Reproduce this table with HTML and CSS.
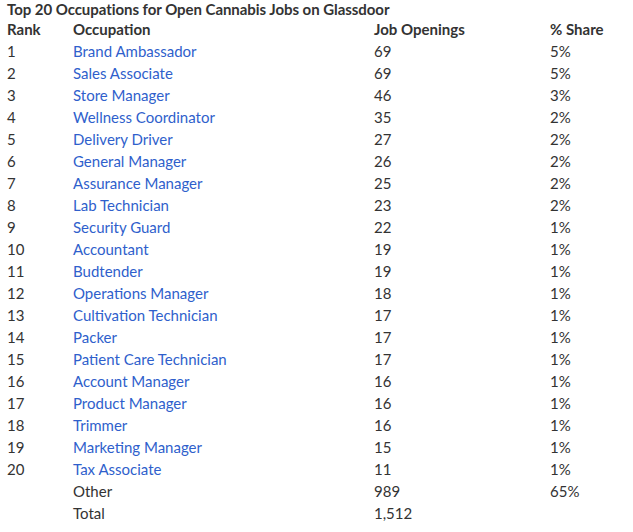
FILE: index.html
```html
<!DOCTYPE html>
<html>
<head>
<meta charset="utf-8">
<link rel="stylesheet" href="styles.css">
</head>
<body>
<div class="wrap">
  <div class="title">Top 20 Occupations for Open Cannabis Jobs on Glassdoor</div>
  <div class="grid">
    <div class="row head"><span>Rank</span><span>Occupation</span><span>Job Openings</span><span>% Share</span></div>
    <div class="row"><span>1</span><a>Brand Ambassador</a><span>69</span><span>5%</span></div>
    <div class="row"><span>2</span><a>Sales Associate</a><span>69</span><span>5%</span></div>
    <div class="row"><span>3</span><a>Store Manager</a><span>46</span><span>3%</span></div>
    <div class="row"><span>4</span><a>Wellness Coordinator</a><span>35</span><span>2%</span></div>
    <div class="row"><span>5</span><a>Delivery Driver</a><span>27</span><span>2%</span></div>
    <div class="row"><span>6</span><a>General Manager</a><span>26</span><span>2%</span></div>
    <div class="row"><span>7</span><a>Assurance Manager</a><span>25</span><span>2%</span></div>
    <div class="row"><span>8</span><a>Lab Technician</a><span>23</span><span>2%</span></div>
    <div class="row"><span>9</span><a>Security Guard</a><span>22</span><span>1%</span></div>
    <div class="row"><span>10</span><a>Accountant</a><span>19</span><span>1%</span></div>
    <div class="row"><span>11</span><a>Budtender</a><span>19</span><span>1%</span></div>
    <div class="row"><span>12</span><a>Operations Manager</a><span>18</span><span>1%</span></div>
    <div class="row"><span>13</span><a>Cultivation Technician</a><span>17</span><span>1%</span></div>
    <div class="row"><span>14</span><a>Packer</a><span>17</span><span>1%</span></div>
    <div class="row"><span>15</span><a>Patient Care Technician</a><span>17</span><span>1%</span></div>
    <div class="row"><span>16</span><a>Account Manager</a><span>16</span><span>1%</span></div>
    <div class="row"><span>17</span><a>Product Manager</a><span>16</span><span>1%</span></div>
    <div class="row"><span>18</span><a>Trimmer</a><span>16</span><span>1%</span></div>
    <div class="row"><span>19</span><a>Marketing Manager</a><span>15</span><span>1%</span></div>
    <div class="row"><span>20</span><a>Tax Associate</a><span>11</span><span>1%</span></div>
    <div class="row"><span></span><span>Other</span><span>989</span><span>65%</span></div>
    <div class="row"><span></span><span>Total</span><span>1,512</span><span></span></div>
  </div>
</div>
</body>
</html>
```
FILE: styles.css
```css
html, body {
  margin: 0;
  padding: 0;
  background: #fff;
}
body {
  font-family: Lato, "Liberation Sans", sans-serif;
  font-size: 15px;
  color: #333;
}
.wrap {
  padding: 0 0 0 7px;
}
.title {
  font-weight: bold;
  line-height: 18px;
  letter-spacing: -0.05px;
}
.row {
  display: grid;
  grid-template-columns: 66px 301px 176px 1fr;
  height: 22px;
  line-height: 22px;
}
.head {
  font-weight: bold;
}
.row a {
  color: #2f5fcc;
  text-decoration: none;
}
```
